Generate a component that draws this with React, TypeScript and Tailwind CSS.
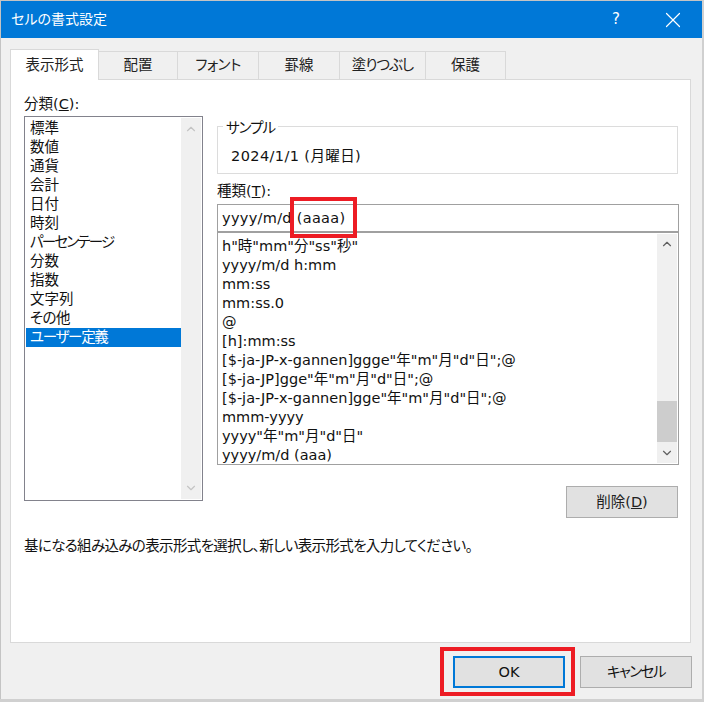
import { ChevronDown, ChevronUp, X } from "lucide-react";

const font = { fontFamily: '"DejaVu Sans", "Noto Sans CJK JP", sans-serif', fontFeatureSettings: '"palt"' };

const tabs = [
  { label: "配置", width: "w-[79px]", spacing: "" },
  { label: "フォント", width: "w-[81px]", spacing: "tracking-[-0.5px]" },
  { label: "罫線", width: "w-[81px]", spacing: "" },
  { label: "塗りつぶし", width: "w-[86px]", spacing: "tracking-[-1px]" },
  { label: "保護", width: "w-[80px]", spacing: "" },
];

const categories = [
  { label: "標準", spacing: "" },
  { label: "数値", spacing: "" },
  { label: "通貨", spacing: "" },
  { label: "会計", spacing: "" },
  { label: "日付", spacing: "" },
  { label: "時刻", spacing: "" },
  { label: "パーセンテージ", spacing: "tracking-[-1.8px]" },
  { label: "分数", spacing: "" },
  { label: "指数", spacing: "" },
  { label: "文字列", spacing: "" },
  { label: "その他", spacing: "tracking-[-0.5px]" },
  { label: "ユーザー定義", spacing: "tracking-[-1.3px]" },
];

const formats = [
  'h"時"mm"分"ss"秒"',
  "yyyy/m/d h:mm",
  "mm:ss",
  "mm:ss.0",
  "@",
  "[h]:mm:ss",
  '[$-ja-JP-x-gannen]ggge"年"m"月"d"日";@',
  '[$-ja-JP]gge"年"m"月"d"日";@',
  '[$-ja-JP-x-gannen]gge"年"m"月"d"日";@',
  "mmm-yyyy",
  'yyyy"年"m"月"d"日"',
  "yyyy/m/d (aaa)",
];

export default function App() {
  return (
    <div style={font} className="relative w-[704px] h-[702px] overflow-hidden bg-[#d0d0d0] text-[14.5px] leading-[19px] text-[#111]">
      <div className="w-[702px] h-[699px] bg-[#f0f0f0] border-l border-t border-[#c4c4c4]">
        {/* title bar */}
        <div className="h-[37px] bg-[#0078d7] text-white flex items-center pl-[10px] pr-[16px]">
          <span className="flex-1 text-[14px]">セルの書式設定</span>
          <span className="text-[15px] mr-[40px]">?</span>
          <X size={26} strokeWidth={1.1} />
        </div>

        {/* tabs */}
        <div className="flex items-end h-[41px] pl-[9px] text-[#222]">
          <div className="w-[89px] h-[31px] -mb-px relative z-10 bg-white border border-b-0 border-[#d9d9d9] flex items-center justify-center">
            表示形式
          </div>
          {tabs.map((t) => (
            <div key={t.label} className={`${t.width} ${t.spacing} h-[28px] bg-[#f0f0f0] border border-l-0 border-b-0 border-[#d9d9d9] flex items-center justify-center`}>
              {t.label}
            </div>
          ))}
        </div>

        {/* panel */}
        <div className="ml-[9px] w-[681px] h-[564px] bg-white border border-[#d9d9d9] pl-[13px] pt-[15px]">
          <div className="flex">
            <div className="w-[179px]">
              <div className="h-[21px]">分類(<span className="underline">C</span>):</div>
              <div className="h-[385px] border border-[#82828c] flex">
                <div className="flex-1 pl-[1px] pt-[2px]">
                  {categories.map((c, i) => (
                    <div key={c.label} className={`${c.spacing} h-[19px] pl-[4px] whitespace-nowrap ${i === 11 ? "bg-[#0078d7] text-white" : ""}`}>
                      {c.label}
                    </div>
                  ))}
                </div>
                <div className="w-[20px] my-px mr-px bg-[#f0f0f0] flex flex-col justify-between items-center py-[4px] text-[#c4c4c4]">
                  <ChevronUp size={14} strokeWidth={2} />
                  <ChevronDown size={14} strokeWidth={2} />
                </div>
              </div>
            </div>

            <div className="ml-[14px] w-[462px]">
              {/* sample group */}
              <div className="relative mt-[31px] mr-px h-[48px] border border-[#dcdcdc] pl-[13px] pt-[20px]">
                <span className="absolute left-[5px] -top-[8px] bg-white px-[3px] tracking-[-1px]">サンプル</span>
                <span className="tracking-[0.4px]">2024/1/1 (月曜日)</span>
              </div>

              <div className="mt-[8px] h-[22px]">種類(<span className="underline">T</span>):</div>
              <div className="h-[29px] border border-[#a0a0a0] border-b-2 pl-[4px] flex items-center whitespace-pre tracking-[0.3px]">
                yyyy/m/d (aaaa)
              </div>
              <div className="h-[232px] border border-t-0 border-[#a0a0a0] flex">
                <div className="flex-1 pl-[4px] pt-[4px] overflow-hidden whitespace-nowrap">
                  {formats.map((f) => (
                    <div key={f} className="h-[19px]">{f}</div>
                  ))}
                </div>
                <div className="w-[20px] mr-px my-px bg-[#f0f0f0] flex flex-col items-center text-[#606060]">
                  <div className="h-[20px] flex items-center justify-center">
                    <ChevronUp size={14} strokeWidth={2} />
                  </div>
                  <div className="h-[147px]" />
                  <div className="w-full h-[41px] bg-[#cdcdcd]" />
                  <div className="flex-1 flex items-center justify-center">
                    <ChevronDown size={14} strokeWidth={2} />
                  </div>
                </div>
              </div>
              <div className="flex justify-end mt-[21px] pr-px">
                <button className="w-[112px] h-[32px] bg-[#e1e1e1] border border-[#adadad] text-[#222]">
                  削除(<span className="underline">D</span>)
                </button>
              </div>
            </div>
          </div>
          <div className="mt-[19px] whitespace-nowrap tracking-[-0.65px]">基になる組み込みの表示形式を選択し、新しい表示形式を入力してください。</div>
        </div>

        {/* footer buttons */}
        <div className="flex justify-end gap-[15px] pr-[10px] pt-[13px]">
          <button className="w-[112px] h-[32px] bg-[#e1e1e1] border-2 border-[#0078d7]">OK</button>
          <button className="w-[112px] h-[32px] bg-[#e1e1e1] border border-[#adadad] tracking-[-1.5px]">キャンセル</button>
        </div>
      </div>

      {/* red annotation frames */}
      <div className="absolute left-[290px] top-[197px] w-[67px] h-[41px] border-[4px] border-[#ed1c24]" />
      <div className="absolute left-[440px] top-[647px] w-[135px] h-[49px] border-[4px] border-[#ed1c24]" />
    </div>
  );
}
